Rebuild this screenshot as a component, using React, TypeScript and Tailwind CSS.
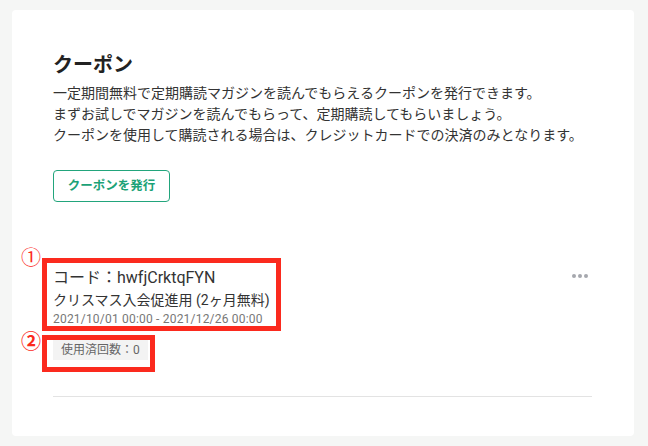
import React from "react";

export default function App() {
  return (
    <div
      className="w-[648px] h-[446px] bg-[#f5f6f5] pt-[10px] pl-[12px]"
      style={{ fontFamily: '"Roboto", "Noto Sans CJK JP", sans-serif' }}
    >
      <div className="relative bg-white rounded-[4px] w-[622px] h-[426px] pt-[41px] pl-[41px] pr-[42px]">
        <h1 className="text-[20px] leading-[28px] font-bold text-[#222]">クーポン</h1>
        <div className="mt-[4px] text-[14px] leading-[21px] text-[#333]">
          <p>一定期間無料で定期購読マガジンを読んでもらえるクーポンを発行できます。</p>
          <p>まずお試しでマガジンを読んでもらって、定期購読してもらいましょう。</p>
          <p>クーポンを使用して購読される場合は、クレジットカードでの決済のみとなります。</p>
        </div>
        <button className="mt-[24px] w-[117px] h-[32px] border border-[#22a57c] rounded-[4px] text-[12.5px] font-bold text-[#1ba277] flex items-center justify-center">
          クーポンを発行
        </button>

        <div className="mt-[64px] flex justify-between items-start">
          <div>
            <div className="text-[16px] leading-[24px] text-[#333]">コード：hwfjCrktqFYN</div>
            <div className="text-[14px] leading-[21px] text-[#333]">クリスマス入会促進用 (2ヶ月無料)</div>
            <div className="text-[12px] leading-[16px] tracking-[0.2px] text-[#777]">2021/10/01 00:00 - 2021/12/26 00:00</div>
            <div className="mt-[13px] inline-flex items-center h-[20px] px-[8px] bg-[#f3f3f3] text-[12px] text-[#666]">
              使用済回数：0
            </div>
          </div>
          <div className="mt-[8px] mr-[4px] flex gap-[2px]">
            <span className="w-[4px] h-[4px] rounded-full bg-[#a6a8ae]" />
            <span className="w-[4px] h-[4px] rounded-full bg-[#a6a8ae]" />
            <span className="w-[4px] h-[4px] rounded-full bg-[#a6a8ae]" />
          </div>
        </div>
        <div className="mt-[35px] border-t border-[#e3e3e3]" />

        <div className="absolute left-[30px] top-[248px] w-[239px] h-[73px] border-[5px] border-[#fb2a1e]" />
        <div className="absolute left-[30px] top-[325px] w-[113px] h-[37px] border-[5px] border-[#fb2a1e]" />
        <div className="absolute left-[9px] top-[236px] text-[20px] leading-[24px] text-[#fb2a1e]">①</div>
        <div className="absolute left-[9px] top-[320px] text-[20px] leading-[24px] text-[#fb2a1e] font-bold">②</div>
      </div>
    </div>
  );
}
